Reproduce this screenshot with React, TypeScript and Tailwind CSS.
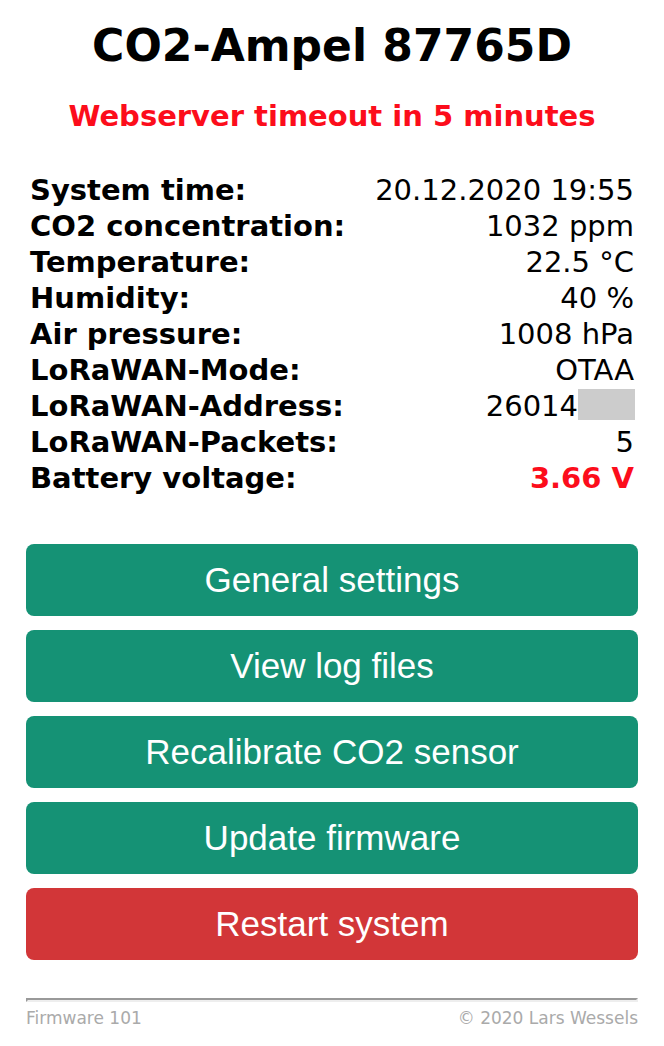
import React from "react";

type Reading = { label: string; value: string; alert?: boolean; redacted?: boolean };

const readings: Reading[] = [
  { label: "System time:", value: "20.12.2020 19:55" },
  { label: "CO2 concentration:", value: "1032 ppm" },
  { label: "Temperature:", value: "22.5 °C" },
  { label: "Humidity:", value: "40 %" },
  { label: "Air pressure:", value: "1008 hPa" },
  { label: "LoRaWAN-Mode:", value: "OTAA" },
  { label: "LoRaWAN-Address:", value: "26014", redacted: true },
  { label: "LoRaWAN-Packets:", value: "5" },
  { label: "Battery voltage:", value: "3.66 V", alert: true },
];

function ActionButton({ label, danger }: { label: string; danger?: boolean }) {
  return (
    <button
      type="button"
      className={`h-[72px] w-full cursor-pointer rounded-lg font-['Liberation_Sans',Arial,sans-serif] text-[35px] leading-[72px] text-white ${
        danger ? "bg-[#d23638]" : "bg-[#159275]"
      }`}
    >
      {label}
    </button>
  );
}

export default function App() {
  return (
    <div className="min-h-screen bg-white px-[26px] pt-5 pb-4 font-['DejaVu_Sans',Verdana,sans-serif] text-black">
      <h1 className="text-center text-[44px] leading-[52px] font-bold">CO2-Ampel 87765D</h1>
      <p className="mt-6 text-center text-[29px] leading-10 font-bold text-[#fc0d1b]">
        Webserver timeout in 5 minutes
      </p>
      <table className="mt-9 w-full text-[29px] leading-9">
        <tbody>
          {readings.map((r) => (
            <tr key={r.label}>
              <th scope="row" className="pl-1 text-left font-bold whitespace-nowrap">
                {r.label}
              </th>
              <td
                className={`text-right whitespace-nowrap ${r.redacted ? "pr-[3px]" : "pr-1"} ${r.alert ? "font-bold text-[#fc0d1b]" : ""}`}
              >
                {r.redacted ? (
                  <span className="flex h-9 items-start justify-end">
                    {r.value}
                    <span className="mt-px h-[31px] w-[57px] bg-[#cccccc]" />
                  </span>
                ) : (
                  r.value
                )}
              </td>
            </tr>
          ))}
        </tbody>
      </table>
      <div className="mt-12 flex flex-col gap-[14px]">
        <ActionButton label="General settings" />
        <ActionButton label="View log files" />
        <ActionButton label="Recalibrate CO2 sensor" />
        <ActionButton label="Update firmware" />
        <ActionButton label="Restart system" danger />
      </div>
      <hr className="mt-[38px] h-1 border-2 border-t-[#999999] border-r-[#eeeeee] border-b-[#eeeeee] border-l-[#999999]" />
      <footer className="mt-1.5 flex justify-between text-[17px] leading-5 text-[#aaaaaa]">
        <span>Firmware 101</span>
        <span>© 2020 Lars Wessels</span>
      </footer>
    </div>
  );
}
